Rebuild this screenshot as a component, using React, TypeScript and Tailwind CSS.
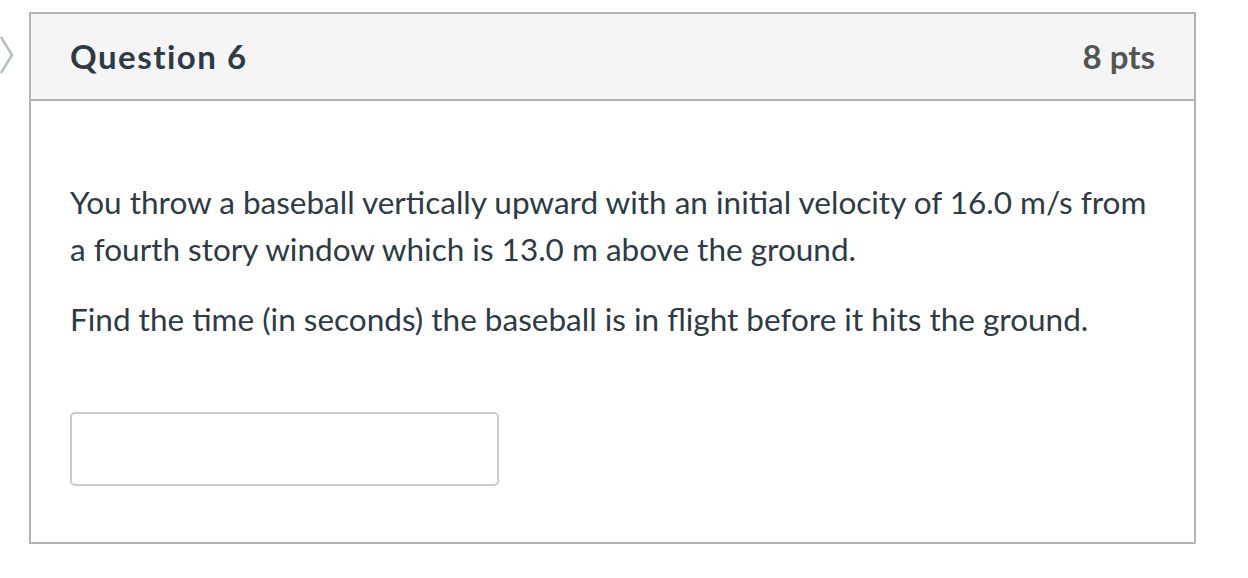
import React from "react";

export default function App() {
  return (
    <div className="w-[1248px] h-[578px] bg-white relative" style={{ fontFamily: "Lato, 'Noto Sans', sans-serif" }}>
      <svg className="absolute left-0 top-[35px]" width="15" height="40" viewBox="0 0 15 40">
        <path d="M1 2 L12 20 L1 38" fill="none" stroke="#b3bec8" strokeWidth="2.5" />
      </svg>
      <div className="pt-[12px] pl-[29px]">
        <div className="w-[1167px] h-[532px] border-2 border-[#b4b4b4] flex flex-col">
          <div className="h-[87px] bg-[#f5f5f5] border-b-2 border-[#b4b4b4] flex items-center justify-between pl-[39px] pr-[39px]">
            <span className="text-[33px] font-bold text-[#2d3b45] tracking-[1.5px]">Question 6</span>
            <span className="text-[33px] font-bold text-[#555555]">8 pts</span>
          </div>
          <div className="flex-1 px-[39px] pt-[78px] text-[31.5px] leading-[47px] text-[#2d3b45]">
            <p>You throw a baseball vertically upward with an initial velocity of 16.0 m/s from a fourth story window which is 13.0 m above the ground.</p>
            <p className="mt-[23px]">Find the time (in seconds) the baseball is in flight before it hits the ground.</p>
            <div className="mt-[69px] w-[429px] h-[74px] border-2 border-[#cccccc] rounded-[5px] bg-white"></div>
          </div>
        </div>
      </div>
    </div>
  );
}
